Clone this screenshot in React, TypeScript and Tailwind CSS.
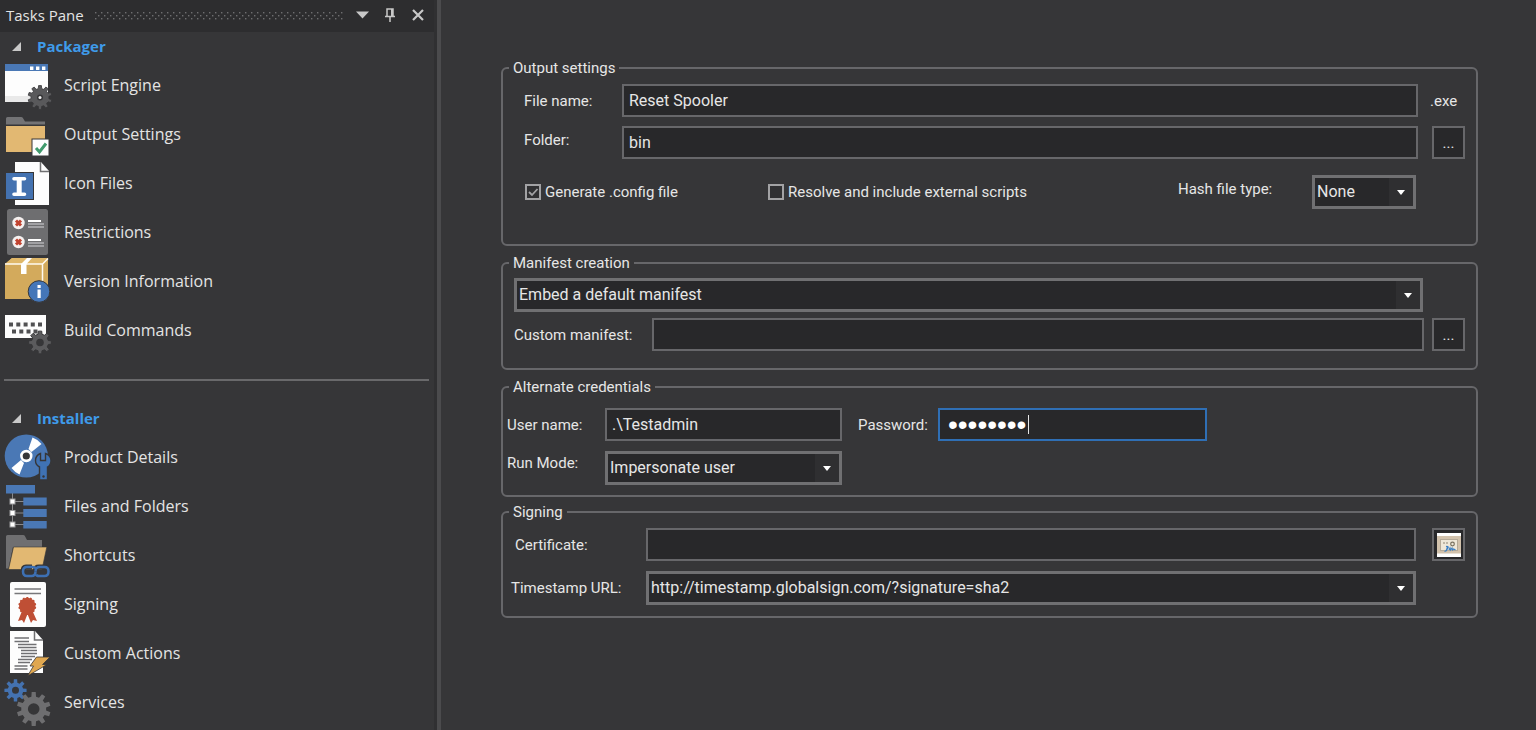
import React, { useState } from 'react';

type IconProps = { children: React.ReactNode };

// Builds the outline of a cog wheel
const gearPath = (cx: number, cy: number, outer: number, inner: number, teeth: number) => {
  const points: string[] = [];
  const step = (Math.PI * 2) / teeth;
  for (let i = 0; i < teeth; i++) {
    const a = i * step - Math.PI / 2;
    [
      [inner, -0.3],
      [outer, -0.19],
      [outer, 0.19],
      [inner, 0.3],
    ].forEach(([r, k]) => {
      points.push(`${(cx + r * Math.cos(a + k * step)).toFixed(2)} ${(cy + r * Math.sin(a + k * step)).toFixed(2)}`);
    });
  }
  return `M${points.join('L')}Z`;
};

const Icon = ({ children }: IconProps) => (
  <svg width="48" height="49" viewBox="0 0 48 49" fill="none" aria-hidden="true" className="shrink-0">
    {children}
  </svg>
);

const ScriptEngineIcon = () => (
  <Icon>
    <rect x="1" y="3" width="43" height="38" fill="#fdfdfd" />
    <rect x="1" y="35" width="43" height="6" fill="#e9e9e9" />
    <rect x="1" y="3" width="43" height="7" fill="#4a78b5" />
    <path d="M26 5.5h3.4v3.4H26zM32 5.5h3.4v3.4H32zM38 5.5h3.4v3.4H38z" fill="#fff" />
    <path d={gearPath(36, 36.5, 12, 9, 10)} fill="#59595b" stroke="#363638" strokeWidth="0.8" />
    <circle cx="36" cy="36.5" r="3" fill="#363638" />
    <circle cx="36" cy="36.5" r="1.5" fill="#f4f4f4" />
  </Icon>
);

const OutputSettingsIcon = () => (
  <Icon>
    <path d="M2 8.5Q2 7 3.5 7H17q1.5 0 2.2 1.4L21 11.5h20V14.5H2z" fill="#737375" />
    <rect x="2" y="16" width="39" height="26" fill="#e2b872" />
    <rect x="28" y="29" width="17" height="17" fill="#fdfdfd" stroke="#363638" />
    <path d="M32 38l3.5 4L42 33.5" stroke="#3f9a6c" strokeWidth="3" />
  </Icon>
);

const IconFilesIcon = () => (
  <Icon>
    <path d="M11 3h26l8 9v34H11z" fill="#fdfdfd" />
    <path d="M36.5 3v9.5H45" stroke="#6f6f71" strokeWidth="1.5" />
    <rect x="1.5" y="13.5" width="28" height="27" fill="#4472b0" stroke="#363638" />
    <path d="M10 19.7h10.5M10 35.3h10.5" stroke="#fff" strokeWidth="3.6" strokeLinecap="round" />
    <path d="M15.2 20v15" stroke="#fff" strokeWidth="5" />
  </Icon>
);

const RestrictionsIcon = () => (
  <Icon>
    <rect x="3" y="1" width="41" height="46" rx="2.5" fill="#6e6e70" />
    {[15, 34].map((y) => (
      <g key={y}>
        <circle cx="14.5" cy={y} r="6.2" fill="#f5f1f0" />
        <path d={`M12 ${y - 2.5}l5 5m0-5l-5 5`} stroke="#c0422f" strokeWidth="3" />
        <path d={`M24 ${y - 2}h13`} stroke="#fff" strokeWidth="2" />
        <path d={`M24 ${y + 1}h16M24 ${y + 4}h16`} stroke="#b4b4b6" strokeWidth="1.5" />
      </g>
    ))}
  </Icon>
);

const VersionIcon = () => (
  <Icon>
    <path d="M1 7l7-6h36v29l-6 12H1z" fill="#d3aa5c" />
    <path d="M1 7l7-6h36l-5 6z" fill="#dfb768" />
    <path d="M1 7h37.5L44 1.5M38.5 7v25" stroke="#fffaf0" strokeWidth="1.5" />
    <path d="M17 7l6-6h5l-5.5 6v10H17z" fill="#fff" />
    <circle cx="35" cy="34.5" r="10.8" fill="#4476b8" stroke="#363638" />
    <path d="M33.5 28h3.2v3h-3.2zM33.5 32.5h3.2V41h-3.2z" fill="#fff" />
  </Icon>
);

const BuildCommandsIcon = () => (
  <Icon>
    <rect x="1" y="9" width="41" height="23" fill="#fdfdfd" />
    <path
      d="M5 16.5h4v4H5zM12.3 16.5h4v4h-4zM19.6 16.5h4v4h-4zM26.8 16.5h4v4h-4zM34 16.5h4v4h-4zM8 23.5h4v4H8zM15.3 23.5h4v4h-4zM22.5 23.5h4v4h-4zM29.5 23.5h4v4h-4z"
      fill="#505052"
    />
    <path d={gearPath(36, 36.5, 11.5, 8.5, 8)} fill="#5b5b5d" stroke="#363638" />
    <circle cx="36" cy="36.5" r="3.8" fill="#363638" />
  </Icon>
);

const ProductDetailsIcon = () => (
  <Icon>
    <circle cx="22.3" cy="23" r="21.6" fill="#4a78b5" />
    <path d="M24.5 16L28.5 4.5Q34 6.5 37.5 11L27.5 19zM20 30L15.5 41.5Q10.5 39 7.5 35L17 27z" fill="#fff" />
    <circle cx="22.3" cy="23" r="4.9" fill="#363638" stroke="#fff" strokeWidth="2.6" />
    <path
      d="M36.5 20.5v7h5v-7q5.5 2 5.5 7.2 0 4.3-3.5 6.3V47h-8V34Q31.5 32 31.5 27.5q0-5 5-7z"
      fill="#3f72b4"
      stroke="#363638"
      strokeWidth="1.4"
    />
    <circle cx="39.5" cy="43.5" r="1.2" fill="#363638" />
  </Icon>
);

const FilesFoldersIcon = () => (
  <Icon>
    <path d="M8.5 11v32M8.5 19.5H20M8.5 31H20M8.5 42.5H20" stroke="#8a8a8c" />
    <path d="M2 3h29v8.5H2zM19.3 15.5h23.4v8H19.3zM19.3 27h23.4v8H19.3zM19.3 39h23.4v7.5H19.3z" fill="#4a78b5" />
    <g fill="#fff" stroke="#9a9a9c">
      <rect x="6" y="17" width="5" height="5" />
      <rect x="6" y="28.5" width="5" height="5" />
      <rect x="6" y="40" width="5" height="5" />
    </g>
  </Icon>
);

const ShortcutsIcon = () => (
  <Icon>
    <path d="M2 5.5Q2 4 3.5 4H19q1.5 0 2 1.2L23 9h15v7H9L4.5 37.5H2z" fill="#6f6f71" />
    <path d="M9.5 16h33.3L38 38.5H4.5z" fill="#e2b872" stroke="#363638" strokeWidth="0.6" />
    <g strokeLinejoin="round">
      <path d="M28 36h-6q-3 0-3 4.5t3 4.5h6q3 0 3-3M34 45h7q3.5 0 3.5-4.5T41 36h-6q-3.5 0-3.5 3" stroke="#363638" strokeWidth="5" />
      <path d="M31.5 37.5Q31 36 28 36h-5q-4 0-4 4.5t4 4.5h4.5q4 0 4-4.5" stroke="#3d70b3" strokeWidth="2.5" />
      <path d="M32 43.5Q32.5 45 35 45h5.5q4 0 4-4.5t-4-4.5H36q-4.5 0-4.5 4.5" stroke="#3d70b3" strokeWidth="2.5" />
    </g>
  </Icon>
);

const SigningIcon = () => (
  <Icon>
    <rect x="6" y="2" width="36" height="45" rx="2" fill="#fdfdfd" />
    <path d="M10.5 9h26.5M10.5 13.5h26.5" stroke="#77777a" strokeWidth="1.5" />
    <path d="M18 31l-4 10 4-1 2 3 3.5-9 3.5 9 2-3 4 1-4.5-10z" fill="#bf4f35" />
    <path d={gearPath(23.3, 26, 9, 8.2, 14)} fill="#bf4f35" />
  </Icon>
);

const CustomActionsIcon = () => (
  <Icon>
    <path d="M6 2h25l8 9v33H6z" fill="#fdfdfd" />
    <path d="M30.5 2v9H39" stroke="#6f6f71" strokeWidth="1.5" />
    <path
      d="M10.5 9H25M10.5 12.5H25M14 15.5h18.5M14 18.5h18.5M17 21.5h16M17 24.5h16M17 27.5h14M14 30.5h14M14 33.5h12M10.5 37h13M10.5 40h13"
      stroke="#707073"
      strokeWidth="1.3"
    />
    <path d="M32.5 28H46L38.5 35.5H43L23.5 47l6-10H26z" fill="#e0a750" stroke="#363638" strokeWidth="0.8" />
  </Icon>
);

const ServicesIcon = () => (
  <Icon>
    <path d={gearPath(11.5, 12.3, 11.2, 7.8, 8)} fill="#4472b0" />
    <circle cx="11.5" cy="12.3" r="3.5" fill="#363638" />
    <path d={gearPath(29.7, 31, 17, 12.5, 10)} fill="#6e6e70" />
    <circle cx="29.7" cy="31" r="5.8" fill="#363638" />
  </Icon>
);

const CertificateIcon = () => (
  <svg width="24" height="24" viewBox="0 0 24 24" fill="none" aria-hidden="true">
    <rect width="24" height="24" fill="#fff" />
    <rect y="3" width="24" height="17.5" fill="#d2c2ac" />
    <rect x="3.5" y="6.5" width="17" height="11" fill="#eee7d8" stroke="#b5aa98" />
    <path d="M6 10h6" stroke="#8c8474" strokeDasharray="2 1" />
    <circle cx="15.5" cy="11" r="1.8" stroke="#77705f" strokeWidth="1.2" />
    <path d="M7.5 18.5l2-1 1-4M9 13.5q3-.5 2 1.5t-2 1.5M12 17l1-2 .5 2 1.5-2 .5 2 1.2-1 1.8 1" stroke="#3b7fc4" strokeWidth="1.2" />
  </svg>
);

const sections = [
  {
    title: 'Packager',
    items: [
      { label: 'Script Engine', icon: ScriptEngineIcon },
      { label: 'Output Settings', icon: OutputSettingsIcon },
      { label: 'Icon Files', icon: IconFilesIcon },
      { label: 'Restrictions', icon: RestrictionsIcon },
      { label: 'Version Information', icon: VersionIcon },
      { label: 'Build Commands', icon: BuildCommandsIcon },
    ],
  },
  {
    title: 'Installer',
    items: [
      { label: 'Product Details', icon: ProductDetailsIcon },
      { label: 'Files and Folders', icon: FilesFoldersIcon },
      { label: 'Shortcuts', icon: ShortcutsIcon },
      { label: 'Signing', icon: SigningIcon },
      { label: 'Custom Actions', icon: CustomActionsIcon },
      { label: 'Services', icon: ServicesIcon },
    ],
  },
];

const PaneHeader = () => (
  <header className="flex h-8 items-center bg-[#2d2d2f] pb-[2px] pl-[6px] pr-[10px]">
    <h1 className="text-[15px] leading-6">Tasks Pane</h1>
    <svg height="9" className="ml-[10px] min-w-0 flex-1" aria-hidden="true">
      <defs>
        <pattern id="grip" width="6" height="6" patternUnits="userSpaceOnUse">
          <rect x="1" y="1" width="1.4" height="1.4" fill="#6e6e70" />
          <rect x="4" y="4" width="1.4" height="1.4" fill="#6e6e70" />
        </pattern>
      </defs>
      <rect width="100%" height="9" fill="url(#grip)" />
    </svg>
    <button aria-label="Window position" className="ml-3 w-3">
      <svg width="13" height="8" viewBox="0 0 13 8"><path d="M0 .5h13L6.5 7.5z" fill="#c8c8c8" /></svg>
    </button>
    <button aria-label="Auto hide" className="ml-4 w-3">
      <svg width="12" height="14" viewBox="0 0 12 14" fill="none" stroke="#c8c8c8">
        <path d="M3 8V1h6v7M1 8.5h10M6 9v5" strokeWidth="1.5" />
        <path d="M8 1v7" strokeWidth="2" />
      </svg>
    </button>
    <button aria-label="Close" className="ml-4 w-3">
      <svg width="12" height="12" viewBox="0 0 12 12" stroke="#c8c8c8" strokeWidth="2.2"><path d="M1 1l10 10M11 1L1 11" /></svg>
    </button>
  </header>
);

const TasksPane = () => (
  <aside className="flex w-[437px] shrink-0 flex-col border-r-[3px] border-[#303032] font-['Open_Sans',sans-serif] text-[#e4e4e4]">
    <PaneHeader />
    <nav className="pl-1 pr-[5px]">
      {sections.map((section, index) => (
        <section key={section.title} className={index > 0 ? 'mt-6 border-t-2 border-[#69696b] pt-[23px]' : ''}>
          <h2 className="flex h-[29px] items-center text-[15px] font-bold text-[#3f9bea]">
            <button className="flex items-center gap-4 pl-2">
              <svg width="9" height="9" viewBox="0 0 9 9" aria-hidden="true"><path d="M9 0v9H0z" fill="#c9c9c9" /></svg>
              {section.title}
            </button>
          </h2>
          <ul>
            {section.items.map((item) => (
              <li key={item.label}>
                <a href="#" className="flex items-center gap-3 text-base leading-6">
                  <item.icon />
                  <span className="pb-[2px]">{item.label}</span>
                </a>
              </li>
            ))}
          </ul>
        </section>
      ))}
    </nav>
  </aside>
);

type GroupProps = { title: string; titleId?: string; className?: string; bodyClass: string; children: React.ReactNode };

const Group = ({ title, titleId, className = '', bodyClass, children }: GroupProps) => (
  <fieldset className={`min-w-0 rounded-md border-2 border-[#67676a] ${className}`}>
    <legend id={titleId} className="ml-[6px] px-1 leading-[18px]">{title}</legend>
    <div className={bodyClass}>{children}</div>
  </fieldset>
);

const TextBox = ({ className = '', ...props }: React.InputHTMLAttributes<HTMLInputElement>) => (
  <input
    className={`h-[33px] min-w-0 border-2 border-[#67676a] bg-[#28282a] px-[5px] text-base outline-none focus:border-[#2f6fb5] ${className}`}
    {...props}
  />
);

type DropDownProps = { id: string; labelledBy?: string; options: string[]; className: string };

const DropDown = ({ id, labelledBy, options, className }: DropDownProps) => (
  <div className={`relative ${className}`}>
    <select
      id={id}
      aria-labelledby={labelledBy}
      className="h-[34px] w-full appearance-none border-[3px] border-[#707072] bg-[#28282a] pl-[2px] pr-7 text-base outline-none"
    >
      {options.map((option) => (
        <option key={option}>{option}</option>
      ))}
    </select>
    <span className="pointer-events-none absolute inset-y-[3px] right-[3px] flex w-6 items-center justify-center bg-[#2f2f31]">
      <svg width="8" height="5" viewBox="0 0 8 5" aria-hidden="true"><path d="M0 0h8L4 5z" fill="#fff" /></svg>
    </span>
  </div>
);

const BrowseButton = ({ label, children = '...' }: { label: string; children?: React.ReactNode }) => (
  <button
    type="button"
    aria-label={label}
    className="flex size-[33px] shrink-0 items-center justify-center border-2 border-[#67676a] bg-[#28282a]"
  >
    {children}
  </button>
);

const CheckBox = ({ label, checked = false }: { label: string; checked?: boolean }) => {
  const [on, setOn] = useState(checked);
  return (
    <label className="flex items-center gap-1">
      <span className="relative size-4">
        <input
          type="checkbox"
          checked={on}
          onChange={() => setOn(!on)}
          className="block size-4 appearance-none border-2 border-[#a2a2a4] bg-[#303032]"
        />
        {on && (
          <svg viewBox="0 0 16 16" fill="none" className="pointer-events-none absolute inset-0" aria-hidden="true">
            <path d="M4 8l3 3 5.5-6" stroke="#a2a2a4" strokeWidth="1.8" />
          </svg>
        )}
      </span>
      {label}
    </label>
  );
};

const SettingsForm = () => (
  <form className="flex flex-col pb-8 pl-[60px] pr-[58px] pt-[59px] font-[Roboto,sans-serif] text-[15px] leading-6 text-[#e6e6e6]">
    <Group title="Output settings" bodyClass="pb-[35px] pl-[21px] pr-[11px] pt-[7px]">
      <div className="flex items-center">
        <label htmlFor="file-name" className="w-[98px]">File name:</label>
        <TextBox id="file-name" defaultValue="Reset Spooler" className="flex-1" />
        <span className="w-[47px] pl-3">.exe</span>
      </div>
      <div className="mt-[9px] flex items-center">
        <label htmlFor="folder" className="w-[98px] self-start leading-7">Folder:</label>
        <TextBox id="folder" defaultValue="bin" className="mr-[14px] flex-1" />
        <BrowseButton label="Browse folder" />
      </div>
      <div className="mt-4 flex items-center pl-px pr-[49px]">
        <div className="flex w-[243px]">
          <CheckBox label="Generate .config file" checked />
        </div>
        <CheckBox label="Resolve and include external scripts" />
        <label htmlFor="hash-type" className="ml-auto w-[134px] self-start leading-7">Hash file type:</label>
        <DropDown id="hash-type" options={['None', 'MD5', 'SHA256']} className="w-[104px]" />
      </div>
    </Group>

    <Group title="Manifest creation" titleId="manifest-title" className="mt-2" bodyClass="px-[11px] pb-[17px] pt-[6px]">
      <DropDown
        id="manifest"
        labelledBy="manifest-title"
        options={['Embed a default manifest', 'Embed a custom manifest']}
        className="mr-[42px]"
      />
      <div className="mt-[6px] flex items-center">
        <label htmlFor="custom-manifest" className="w-[138px]">Custom manifest:</label>
        <TextBox id="custom-manifest" className="mr-2 flex-1" />
        <BrowseButton label="Browse manifest" />
      </div>
    </Group>

    <Group title="Alternate credentials" className="mt-2" bodyClass="pb-[10px] pl-1 pr-[11px] pt-3">
      <div className="flex items-center">
        <label htmlFor="user-name" className="w-[98px]">User name:</label>
        <TextBox id="user-name" defaultValue=".\Testadmin" className="w-[237px]" />
        <label htmlFor="password" className="ml-4 w-20">Password:</label>
        <div className="relative flex w-[269px]">
          <input
            id="password"
            type="password"
            defaultValue="spooler1"
            className="h-[33px] w-full border-2 border-[#2f6fb5] bg-[#28282a] px-2 font-['Liberation_Sans',sans-serif] text-[28px] text-white caret-transparent outline-none"
          />
          <span className="absolute left-[90px] top-[7px] h-[19px] w-px bg-[#e6e6e6]" />
        </div>
      </div>
      <div className="mt-[10px] flex items-center">
        <label htmlFor="run-mode" className="w-[98px] self-start leading-6">Run Mode:</label>
        <DropDown id="run-mode" options={['Impersonate user', 'Run as user']} className="w-[237px]" />
      </div>
    </Group>

    <Group title="Signing" className="mt-[6px]" bodyClass="pb-[11px] pl-2 pr-[11px] pt-[7px]">
      <div className="flex items-center">
        <label htmlFor="certificate" className="w-[135px] pl-1">Certificate:</label>
        <TextBox id="certificate" className="mr-4 flex-1" />
        <BrowseButton label="Choose certificate">
          <CertificateIcon />
        </BrowseButton>
      </div>
      <div className="mt-[10px] flex items-center pr-[49px]">
        <label htmlFor="timestamp" className="w-[135px]">Timestamp URL:</label>
        <DropDown id="timestamp" options={['http://timestamp.globalsign.com/?signature=sha2']} className="flex-1" />
      </div>
    </Group>
  </form>
);

const App = () => (
  <div className="flex min-h-screen bg-[#363638]">
    <TasksPane />
    <main className="min-w-0 flex-1 border-l-4 border-[#4b4b4d]">
      <SettingsForm />
    </main>
  </div>
);

export default App;
